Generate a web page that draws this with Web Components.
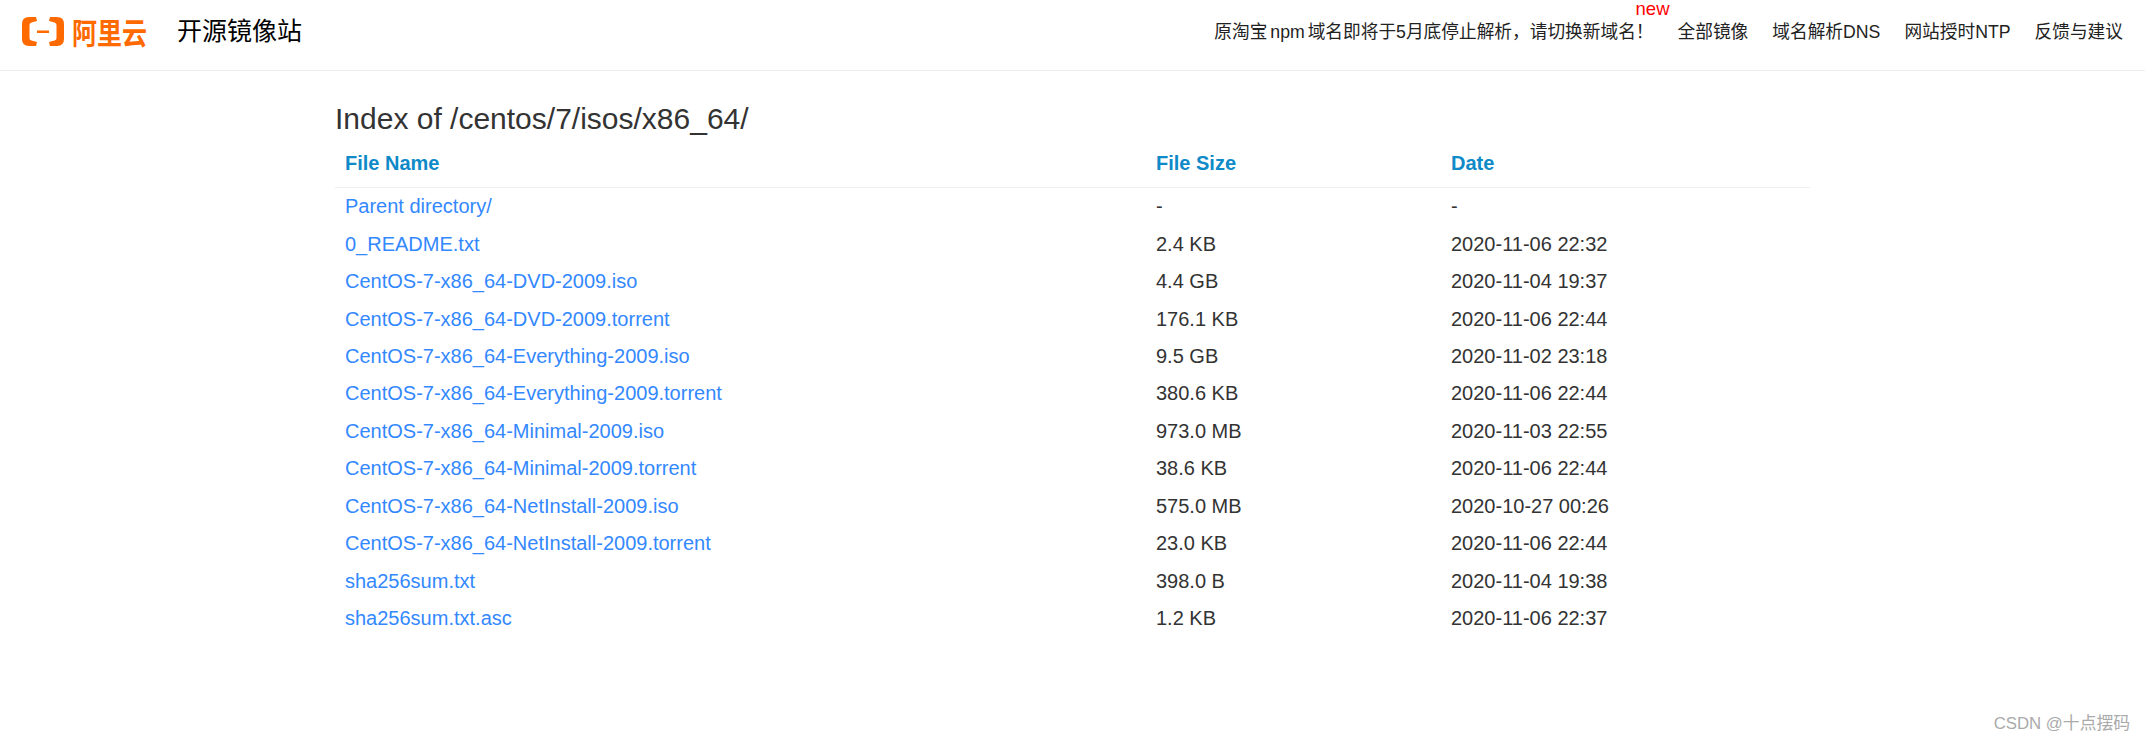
<!DOCTYPE html>
<html><head><meta charset="utf-8">
<style>
html,body{margin:0;padding:0;background:#fff;height:741px;overflow:hidden;font-family:"Liberation Sans","Noto Sans CJK SC",sans-serif}
</style></head><body>
<template id="t-header">
<style>
:host{display:flex;align-items:flex-start;justify-content:space-between;height:70px;border-bottom:1px solid #ededed;box-sizing:content-box;font-family:"Liberation Sans","Noto Sans CJK SC",sans-serif}
.left{display:flex;align-items:center;padding:13px 0 0 22px}
.logo{display:flex;align-items:center;gap:8px;color:#ff6a00}
.logo svg{display:block}
.logo span{display:block;font-size:25px;line-height:30px;font-weight:700;font-family:"Noto Sans CJK SC",sans-serif;width:75px;white-space:nowrap;transform:scaleY(1.18)}
.title{font-size:25px;line-height:36px;margin-left:30px;color:#000}
nav{display:flex;padding:20px 0 0 0}
</style>
<div class="left"><div class="logo"><svg width="42" height="29" viewBox="0 0 42 29"><path fill="#ff6a00" d="M14 0H7Q0 0 0 7V22Q0 29 7 29H14L15 25L9.500 23.500Q7.500 23 7.500 21V8Q7.500 6 9.500 5.500L15 4ZM28 0H35Q42 0 42 7V22Q42 29 35 29H28L27 25L32.500 23.500Q34.500 23 34.500 21V8Q34.500 6 32.500 5.500L27 4Z"/><rect x="15" y="13.500" width="12" height="2.500" fill="#ff6a00"/></svg><span>阿里云</span></div><div class="title">开源镜像站</div></div>
<nav><slot></slot></nav>
</template>
<template id="t-link">
<style>
:host{display:block;position:relative;font-size:17.7px;line-height:24px;color:#222;margin-left:24px;white-space:nowrap}
:host([badge]){word-spacing:-2px}
:host([badge]) .b{display:block}
.b{display:none;position:absolute;right:-16px;top:-21px;color:#f00;font-size:18.500px;line-height:20px}
</style><slot></slot><span class="b">new</span>
</template>
<template id="t-index">
<style>
:host{display:block;margin:0 0 0 335px;width:1475px;font-family:"Liberation Sans","Noto Sans CJK SC",sans-serif}
h1{margin:0;padding-top:30px;font-size:30px;line-height:36px;font-weight:400;color:#333}
.head{display:grid;grid-template-columns:811px 295px 1fr;padding:3px 10px 0;height:47px;align-items:center;border-bottom:1px solid #eee;font-size:20px;font-weight:700;color:#0e8ac8}
</style>
<h1><slot name="title"></slot></h1>
<div class="head"><span>File Name</span><span>File Size</span><span>Date</span></div>
<slot></slot>
</template>
<template id="t-row">
<style>
:host{display:grid;grid-template-columns:811px 295px 1fr;padding:0 10px;height:37.45px;align-items:center;font-size:20px;color:#333}
a{color:#3388ff;text-decoration:none}
</style>
<a><slot></slot></a><span id="s"></span><span id="d"></span>
</template>
<template id="t-mark">
<style>:host{position:absolute;right:15px;bottom:7px;font-size:16.8px;line-height:20px;color:#aaa;font-family:"Liberation Sans","Noto Sans CJK SC",sans-serif}</style><slot></slot>
</template>
<x-header>
<x-link badge>原淘宝 npm 域名即将于5月底停止解析，请切换新域名！</x-link>
<x-link>全部镜像</x-link><x-link>域名解析DNS</x-link><x-link>网站授时NTP</x-link><x-link style="margin-right:22px">反馈与建议</x-link>
</x-header>
<x-index><span slot="title">Index of /centos/7/isos/x86_64/</span>
<x-row size="-" date="-">Parent directory/</x-row>
<x-row size="2.4 KB" date="2020-11-06 22:32">0_README.txt</x-row>
<x-row size="4.4 GB" date="2020-11-04 19:37">CentOS-7-x86_64-DVD-2009.iso</x-row>
<x-row size="176.1 KB" date="2020-11-06 22:44">CentOS-7-x86_64-DVD-2009.torrent</x-row>
<x-row size="9.5 GB" date="2020-11-02 23:18">CentOS-7-x86_64-Everything-2009.iso</x-row>
<x-row size="380.6 KB" date="2020-11-06 22:44">CentOS-7-x86_64-Everything-2009.torrent</x-row>
<x-row size="973.0 MB" date="2020-11-03 22:55">CentOS-7-x86_64-Minimal-2009.iso</x-row>
<x-row size="38.6 KB" date="2020-11-06 22:44">CentOS-7-x86_64-Minimal-2009.torrent</x-row>
<x-row size="575.0 MB" date="2020-10-27 00:26">CentOS-7-x86_64-NetInstall-2009.iso</x-row>
<x-row size="23.0 KB" date="2020-11-06 22:44">CentOS-7-x86_64-NetInstall-2009.torrent</x-row>
<x-row size="398.0 B" date="2020-11-04 19:38">sha256sum.txt</x-row>
<x-row size="1.2 KB" date="2020-11-06 22:37">sha256sum.txt.asc</x-row>
</x-index>
<x-mark>CSDN @十点摆码</x-mark>
<script>
const def=(n,id,init)=>customElements.define(n,class extends HTMLElement{constructor(){super();this.attachShadow({mode:'open'}).append(document.getElementById(id).content.cloneNode(true))}connectedCallback(){init&&init(this)}});
def('x-header','t-header');def('x-link','t-link');def('x-index','t-index');
def('x-row','t-row',e=>{e.shadowRoot.getElementById('s').textContent=e.getAttribute('size');e.shadowRoot.getElementById('d').textContent=e.getAttribute('date')});
def('x-mark','t-mark');
</script>
</body></html>
